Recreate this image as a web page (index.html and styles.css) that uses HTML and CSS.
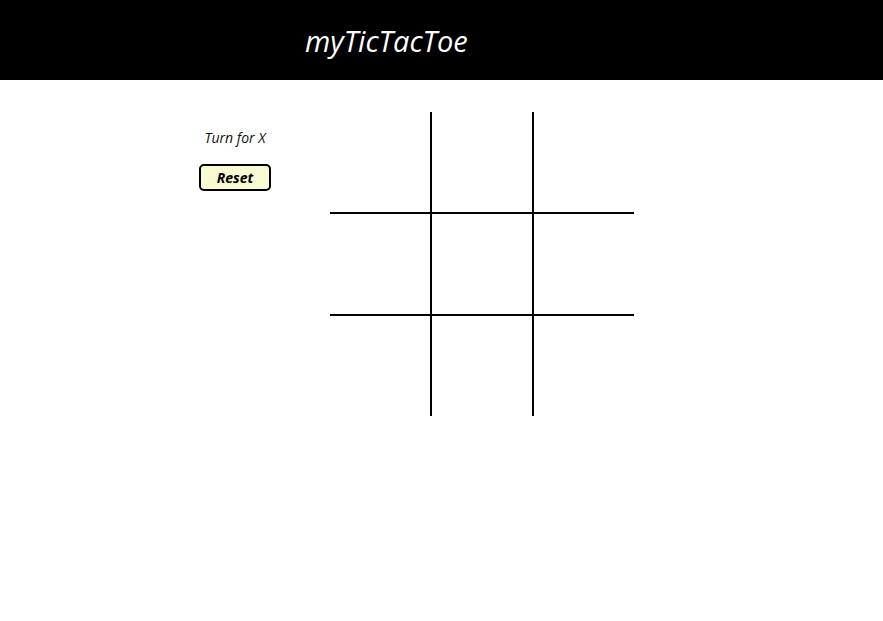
FILE: index.html
```html
<!DOCTYPE html>
<html>
<head>
<meta charset="utf-8">
<title>myTicTacToe</title>
<link rel="stylesheet" href="styles.css">
</head>
<body>
<header class="header">
  <h1 class="title">myTicTacToe</h1>
</header>
<main class="main">
  <aside class="sidebar">
    <p class="turn">Turn for X</p>
    <button class="reset">Reset</button>
  </aside>
  <div class="board">
    <div class="cell"></div><div class="cell"></div><div class="cell"></div>
    <div class="cell"></div><div class="cell"></div><div class="cell"></div>
    <div class="cell"></div><div class="cell"></div><div class="cell"></div>
  </div>
</main>
</body>
</html>
```
FILE: styles.css
```css
* { box-sizing: border-box; }
html, body { margin: 0; padding: 0; background: #fff; }
body { font-family: "Open Sans", "Liberation Sans", sans-serif; }

.header {
  height: 80px;
  background: #000;
  display: flex;
  align-items: center;
  padding-left: 305px;
}
.title {
  margin: 0;
  color: #fff;
  font-style: italic;
  font-weight: 400;
  font-size: 29px;
  line-height: 1;
}

.main {
  display: flex;
  padding-top: 32px;
  padding-left: 180px;
}
.sidebar {
  width: 110px;
  margin-right: 40px;
  display: flex;
  flex-direction: column;
  align-items: center;
  padding-top: 17px;
}
.turn {
  margin: 0;
  font-style: italic;
  font-size: 14px;
  line-height: 18px;
  color: #111;
}
.reset {
  margin-top: 17px;
  width: 72px;
  height: 27px;
  border: 2px solid #000;
  border-radius: 5px;
  background: #fafad2;
  font-family: "Open Sans", "Liberation Sans", sans-serif;
  font-style: italic;
  font-weight: 700;
  font-size: 14px;
  padding: 0;
  color: #000;
}

.board {
  display: grid;
  grid-template-columns: repeat(3, 100px);
  grid-template-rows: repeat(3, 100px);
  gap: 2px;
  background: #000;
}
.cell { background: #fff; }
```
